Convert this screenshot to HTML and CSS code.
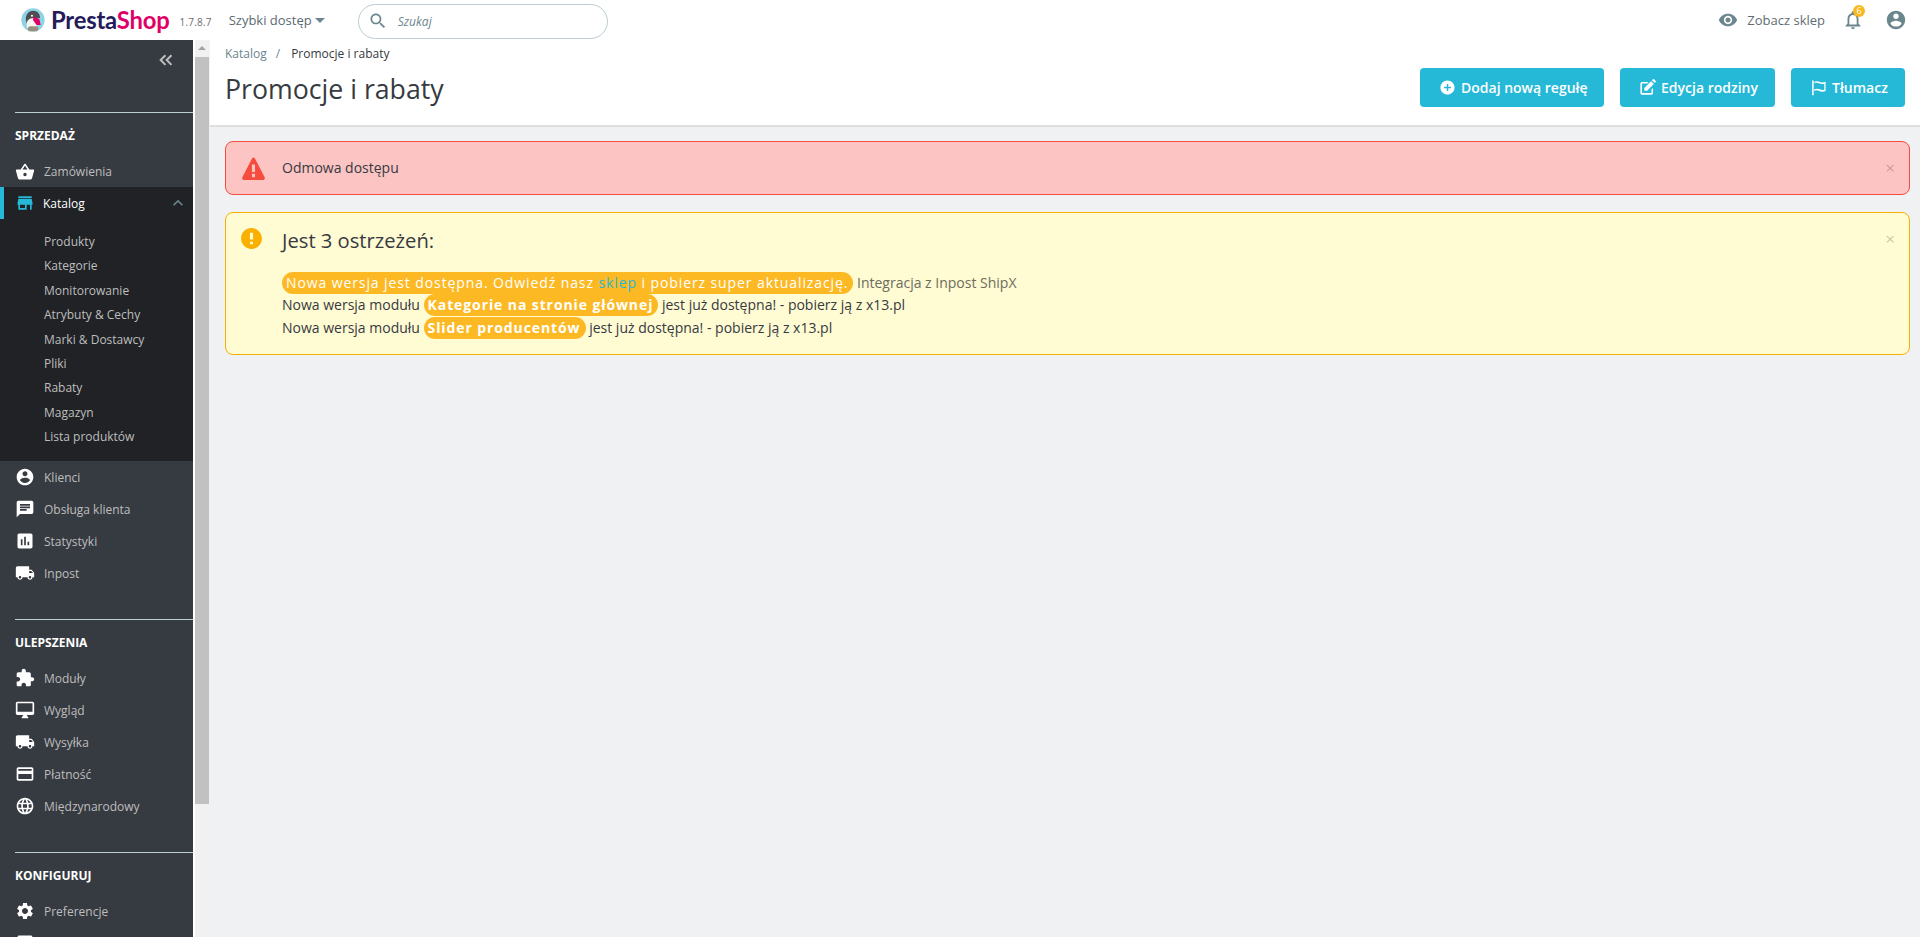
FILE: index.html
```html
<!DOCTYPE html>
<html lang="pl">
<head>
<meta charset="utf-8">
<title>Promocje i rabaty</title>
<link rel="stylesheet" href="styles.css">
</head>
<body>
<svg class="sprite" aria-hidden="true">
  <symbol id="i-basket" viewBox="0 0 24 24"><path d="M17.21 9l-4.38-6.56c-.19-.28-.51-.42-.83-.42-.32 0-.64.14-.83.43L6.79 9H2c-.55 0-1 .45-1 1 0 .09.01.18.04.27l2.54 9.27c.23.84 1 1.46 1.92 1.46h13c.92 0 1.69-.62 1.93-1.46l2.54-9.27L23 10c0-.55-.45-1-1-1h-4.79zM9 9l3-4.4L15 9H9zm3 8c-1.1 0-2-.9-2-2s.9-2 2-2 2 .9 2 2-.9 2-2 2z"/></symbol>
  <symbol id="i-store" viewBox="0 0 24 24"><path d="M20 4H4v2h16V4zm1 10v-2l-1-5H4l-1 5v2h1v6h10v-6h4v6h2v-6h1zm-9 4H6v-4h6v4z"/></symbol>
  <symbol id="i-account" viewBox="0 0 24 24"><path d="M12 2C6.48 2 2 6.48 2 12s4.48 10 10 10 10-4.48 10-10S17.52 2 12 2zm0 3c1.66 0 3 1.34 3 3s-1.34 3-3 3-3-1.34-3-3 1.34-3 3-3zm0 14.2c-2.5 0-4.71-1.28-6-3.22.03-1.99 4-3.08 6-3.08 1.99 0 5.97 1.09 6 3.08-1.29 1.94-3.5 3.22-6 3.22z"/></symbol>
  <symbol id="i-chat" viewBox="0 0 24 24"><path d="M20 2H4c-1.1 0-1.99.9-1.99 2L2 22l4-4h14c1.1 0 2-.9 2-2V4c0-1.1-.9-2-2-2zM6 9h12v2H6V9zm8 5H6v-2h8v2zm4-6H6V6h12v2z"/></symbol>
  <symbol id="i-stats" viewBox="0 0 24 24"><path d="M19 3H5c-1.1 0-2 .9-2 2v14c0 1.1.9 2 2 2h14c1.1 0 2-.9 2-2V5c0-1.1-.9-2-2-2zM9 17H7v-7h2v7zm4 0h-2V7h2v10zm4 0h-2v-4h2v4z"/></symbol>
  <symbol id="i-truck" viewBox="0 0 24 24"><path d="M20 8h-3V4H3c-1.1 0-2 .9-2 2v11h2c0 1.66 1.34 3 3 3s3-1.34 3-3h6c0 1.66 1.34 3 3 3s3-1.34 3-3h2v-5l-3-4zM6 18.5c-.83 0-1.5-.67-1.5-1.5s.67-1.5 1.5-1.5 1.5.67 1.5 1.5-.67 1.5-1.5 1.5zm13.5-9l1.96 2.5H17V9.5h2.5zm-1.5 9c-.83 0-1.5-.67-1.5-1.5s.67-1.5 1.5-1.5 1.5.67 1.5 1.5-.67 1.5-1.5 1.5z"/></symbol>
  <symbol id="i-puzzle" viewBox="0 0 24 24"><path d="M20.5 11H19V7c0-1.1-.9-2-2-2h-4V3.5C13 2.12 11.88 1 10.5 1S8 2.12 8 3.5V5H4c-1.1 0-1.99.9-1.99 2v3.8H3.5c1.49 0 2.7 1.21 2.7 2.7s-1.21 2.7-2.7 2.7H2V20c0 1.1.9 2 2 2h3.8v-1.5c0-1.49 1.21-2.7 2.7-2.7 1.49 0 2.7 1.21 2.7 2.7V22H17c1.1 0 2-.9 2-2v-4h1.5c1.38 0 2.5-1.12 2.5-2.5S21.88 11 20.5 11z"/></symbol>
  <symbol id="i-desktop" viewBox="0 0 24 24"><path d="M21 2H3c-1.1 0-2 .9-2 2v12c0 1.1.9 2 2 2h7l-2 3v1h8v-1l-2-3h7c1.1 0 2-.9 2-2V4c0-1.1-.9-2-2-2zm0 12H3V4h18v10z"/></symbol>
  <symbol id="i-card" viewBox="0 0 24 24"><path d="M20 4H4c-1.11 0-1.99.89-1.99 2L2 18c0 1.11.89 2 2 2h16c1.11 0 2-.89 2-2V6c0-1.11-.89-2-2-2zm0 14H4v-6h16v6zm0-10H4V6h16v2z"/></symbol>
  <symbol id="i-globe" viewBox="0 0 24 24"><path d="M11.99 2C6.47 2 2 6.48 2 12s4.47 10 9.99 10C17.52 22 22 17.52 22 12S17.52 2 11.99 2zm6.93 6h-2.95c-.32-1.25-.78-2.45-1.38-3.56 1.84.63 3.37 1.91 4.33 3.56zM12 4.04c.83 1.2 1.48 2.53 1.91 3.96h-3.82c.43-1.43 1.08-2.76 1.91-3.96zM4.26 14C4.1 13.36 4 12.69 4 12s.1-1.36.26-2h3.38c-.08.66-.14 1.32-.14 2 0 .68.06 1.34.14 2H4.26zm.82 2h2.95c.32 1.25.78 2.45 1.38 3.56-1.84-.63-3.37-1.9-4.33-3.56zm2.95-8H5.08c.96-1.66 2.49-2.93 4.33-3.56C8.81 5.55 8.35 6.75 8.03 8zM12 19.96c-.83-1.2-1.48-2.53-1.91-3.96h3.82c-.43 1.43-1.08 2.76-1.91 3.96zM14.34 14H9.66c-.09-.66-.16-1.32-.16-2 0-.68.07-1.35.16-2h4.68c.09.65.16 1.32.16 2 0 .68-.07 1.34-.16 2zm.25 5.56c.6-1.11 1.06-2.31 1.38-3.56h2.95c-.96 1.65-2.49 2.93-4.33 3.56zM16.36 14c.08-.66.14-1.32.14-2 0-.68-.06-1.34-.14-2h3.38c.16.64.26 1.31.26 2s-.1 1.36-.26 2h-3.38z"/></symbol>
  <symbol id="i-gear" viewBox="0 0 24 24"><path d="M19.14 12.94c.04-.3.06-.61.06-.94 0-.32-.02-.64-.07-.94l2.03-1.58c.18-.14.23-.41.12-.61l-1.92-3.32c-.12-.22-.37-.29-.59-.22l-2.39.96c-.5-.38-1.03-.7-1.62-.94l-.36-2.54c-.04-.24-.24-.41-.48-.41h-3.84c-.24 0-.43.17-.47.41l-.36 2.54c-.59.24-1.13.57-1.62.94l-2.39-.96c-.22-.08-.47 0-.59.22L2.74 8.87c-.12.21-.08.47.12.61l2.03 1.58c-.05.3-.09.63-.09.94s.02.64.07.94l-2.03 1.58c-.18.14-.23.41-.12.61l1.92 3.32c.12.22.37.29.59.22l2.39-.96c.5.38 1.03.7 1.62.94l.36 2.54c.05.24.24.41.48.41h3.84c.24 0 .44-.17.47-.41l.36-2.54c.59-.24 1.13-.56 1.62-.94l2.39.96c.22.08.47 0 .59-.22l1.92-3.32c.12-.22.07-.47-.12-.61l-2.01-1.58zM12 15.6c-1.98 0-3.6-1.62-3.6-3.6s1.62-3.6 3.6-3.6 3.6 1.62 3.6 3.6-1.62 3.6-3.6 3.6z"/></symbol>
  <symbol id="i-eye" viewBox="0 0 24 24"><path d="M12 4.5C7 4.5 2.73 7.61 1 12c1.73 4.39 6 7.5 11 7.5s9.27-3.11 11-7.5c-1.73-4.39-6-7.5-11-7.5zM12 17c-2.76 0-5-2.24-5-5s2.24-5 5-5 5 2.24 5 5-2.24 5-5 5zm0-8c-1.66 0-3 1.34-3 3s1.34 3 3 3 3-1.34 3-3-1.34-3-3-3z"/></symbol>
  <symbol id="i-bell" viewBox="0 0 24 24"><path d="M12 22c1.1 0 2-.9 2-2h-4c0 1.1.9 2 2 2zm6-6v-5c0-3.07-1.63-5.64-4.5-6.32V4c0-.83-.67-1.5-1.5-1.5s-1.5.67-1.5 1.5v.68C7.64 5.36 6 7.92 6 11v5l-2 2v1h16v-1l-2-2zm-2 1H8v-6c0-2.48 1.51-4.5 4-4.5s4 2.02 4 4.5v6z"/></symbol>
  <symbol id="i-search" viewBox="0 0 24 24"><path d="M15.5 14h-.79l-.28-.27C15.41 12.59 16 11.11 16 9.5 16 5.91 13.09 3 9.5 3S3 5.91 3 9.5 5.91 16 9.5 16c1.61 0 3.09-.59 4.23-1.57l.27.28v.79l5 4.99L20.49 19l-4.99-5zm-6 0C7.01 14 5 11.99 5 9.5S7.01 5 9.5 5 14 7.01 14 9.5 11.99 14 9.5 14z"/></symbol>
  <symbol id="i-warning" viewBox="0 2 24 20" preserveAspectRatio="none"><path d="M10.6 3.200c.6-1.100 2.200-1.100 2.800 0l9.300 16.300c.6 1.100-.2 2.500-1.400 2.500H2.700c-1.200 0-2-1.400-1.400-2.500zM10.500 8.500v6.500h3V8.500zM10.500 16.500v3h3v-3z" fill-rule="evenodd"/></symbol>
  <symbol id="i-error" viewBox="0 0 24 24"><path d="M12 2C6.48 2 2 6.48 2 12s4.48 10 10 10 10-4.48 10-10S17.52 2 12 2zm1.500 15.500h-3v-2.500h3zm0-4.500h-3V6.500h3z"/></symbol>
  <symbol id="i-add" viewBox="0 0 24 24"><path d="M12 2C6.48 2 2 6.48 2 12s4.48 10 10 10 10-4.48 10-10S17.52 2 12 2zm5 11h-4v4h-2v-4H7v-2h4V7h2v4h4v2z"/></symbol>
  <symbol id="i-less" viewBox="0 0 24 24"><path d="M12 8l-6 6 1.41 1.41L12 10.83l4.59 4.58L18 14z"/></symbol>
  <symbol id="i-edit" viewBox="0 0 24 24"><path d="M19 12.5V19a2 2 0 0 1-2 2H5a2 2 0 0 1-2-2V7a2 2 0 0 1 2-2h8.500l-2 2H5v12h12v-4.500zM20.300 1.600l2.100 2.100c.4.4.4 1 0 1.400l-1.300 1.300-3.500-3.500 1.300-1.300c.4-.4 1-.4 1.400 0zM16.500 4l3.500 3.500-8.500 8.500H8v-3.500z"/></symbol>
  <symbol id="i-flag" viewBox="0 0 24 24"><path d="M3 2h2.200v21H3zM6 4c2.700-1.300 5-1 7.300 0 2.600 1.100 5.200 1.200 8.700 0v12.800c-3.500 1.500-6.300 1.300-9 .1-2.300-1-4.500-1.200-7-.1v-2.400c2.900-1.100 5.500-.9 7.900.2 2.200 1 4.300 1.100 6.300.4V6.900c-2.800.6-5.100.3-7.600-.8-2-.9-3.700-1-6.100-.1z"/></symbol>
  <symbol id="i-collapse" viewBox="0 0 24 24"><path d="M11.700 4.600l1.900 1.900L8.100 12l5.500 5.500-1.900 1.900L4.300 12zM19.700 4.600l1.900 1.900-5.500 5.500 5.500 5.500-1.900 1.900L12.300 12z"/></symbol>
</svg>

<div class="app">
  <header class="topbar">
    <svg class="logo-mark" viewBox="0 0 34 34" aria-hidden="true">
      <circle cx="17" cy="17" r="16.500" fill="#8ed3e3"/>
      <path d="M7 17c-1-7 4-13 10-13s10 4 10 10l-7 1-5 9-7-2z" fill="#4d4d52"/>
      <path d="M10 31c-3-6-3-13 3-16l7-1 2 6 1 8-1 3c-3 2-9 2-12 0z" fill="#f7f7f2"/>
      <path d="M18 12l8 4 2 8-6 0-5-7z" fill="#df0067"/>
      <path d="M9 29l3-3h11l2 3-2 4H11z" fill="#9a8f7d"/>
      <circle cx="15.500" cy="11" r="1.500" fill="#fff"/>
    </svg>
    <span class="logo-text">Presta<span class="logo-shop">Shop</span></span>
    <span class="version">1.7.8.7</span>
    <span class="quick">Szybki dostęp<span class="caret"></span></span>
    <div class="search">
      <svg class="search-icon"><use href="#i-search"/></svg>
      <span class="search-text">Szukaj</span>
    </div>
    <div class="top-right">
      <svg class="eye"><use href="#i-eye"/></svg>
      <span class="see-shop">Zobacz sklep</span>
      <span class="bell-wrap">
        <svg class="bell"><use href="#i-bell"/></svg>
        <span class="badge">6</span>
      </span>
      <svg class="user"><use href="#i-account"/></svg>
    </div>
  </header>

  <aside class="side">
    <nav class="nav">
      <div class="collapse-row"><svg class="collapse"><use href="#i-collapse"/></svg></div>
      <section class="group">
        <h2 class="group-title">SPRZEDAŻ</h2>
        <a class="item"><svg class="ic"><use href="#i-basket"/></svg>Zamówienia</a>
        <a class="item active"><svg class="ic"><use href="#i-store"/></svg>Katalog<svg class="chev"><use href="#i-less"/></svg></a>
        <div class="sub">
          <a class="sub-item">Produkty</a>
          <a class="sub-item">Kategorie</a>
          <a class="sub-item">Monitorowanie</a>
          <a class="sub-item">Atrybuty &amp; Cechy</a>
          <a class="sub-item">Marki &amp; Dostawcy</a>
          <a class="sub-item">Pliki</a>
          <a class="sub-item">Rabaty</a>
          <a class="sub-item">Magazyn</a>
          <a class="sub-item">Lista produktów</a>
        </div>
        <a class="item"><svg class="ic"><use href="#i-account"/></svg>Klienci</a>
        <a class="item"><svg class="ic"><use href="#i-chat"/></svg>Obsługa klienta</a>
        <a class="item"><svg class="ic"><use href="#i-stats"/></svg>Statystyki</a>
        <a class="item"><svg class="ic"><use href="#i-truck"/></svg>Inpost</a>
      </section>
      <section class="group">
        <h2 class="group-title">ULEPSZENIA</h2>
        <a class="item"><svg class="ic"><use href="#i-puzzle"/></svg>Moduły</a>
        <a class="item"><svg class="ic"><use href="#i-desktop"/></svg>Wygląd</a>
        <a class="item"><svg class="ic"><use href="#i-truck"/></svg>Wysyłka</a>
        <a class="item"><svg class="ic"><use href="#i-card"/></svg>Płatność</a>
        <a class="item"><svg class="ic"><use href="#i-globe"/></svg>Międzynarodowy</a>
      </section>
      <section class="group">
        <h2 class="group-title">KONFIGURUJ</h2>
        <a class="item"><svg class="ic"><use href="#i-gear"/></svg>Preferencje</a>
        <a class="item"><svg class="ic"><use href="#i-stats"/></svg></a>
      </section>
    </nav>
    <div class="scroll">
      <span class="scroll-up"></span>
      <span class="scroll-thumb"></span>
    </div>
  </aside>

  <main class="main">
    <div class="head">
      <div class="head-left">
        <div class="crumbs"><span class="crumb">Katalog</span><span class="sep">/</span><span class="crumb-now">Promocje i rabaty</span></div>
        <h1 class="title">Promocje i rabaty</h1>
      </div>
      <div class="actions">
        <a class="btn btn-add"><svg class="btn-ic"><use href="#i-add"/></svg>Dodaj nową regułę</a>
        <a class="btn btn-edit"><svg class="btn-ic btn-ic-edit"><use href="#i-edit"/></svg>Edycja rodziny</a>
        <a class="btn btn-flag"><svg class="btn-ic"><use href="#i-flag"/></svg>Tłumacz</a>
      </div>
    </div>
    <div class="content">
      <div class="alert alert-danger">
        <svg class="alert-ic danger-ic"><use href="#i-warning"/></svg>
        <p class="alert-text">Odmowa dostępu</p>
        <span class="close">×</span>
      </div>
      <div class="alert alert-warn">
        <svg class="alert-ic warn-ic"><use href="#i-error"/></svg>
        <div class="warn-body">
          <h4 class="warn-title">Jest 3 ostrzeżeń:</h4>
          <div class="warn-line"><span class="pill">Nowa wersja jest dostępna. Odwiedź nasz <a class="link">sklep</a> i pobierz super aktualizację.</span> <span class="muted">Integracja z Inpost ShipX</span></div>
          <div class="warn-line">Nowa wersja modułu <span class="pill pill-bold">Kategorie na stronie głównej</span> jest już dostępna! - pobierz ją z x13.pl</div>
          <div class="warn-line">Nowa wersja modułu <span class="pill pill-bold">Slider producentów</span> jest już dostępna! - pobierz ją z x13.pl</div>
        </div>
        <span class="close">×</span>
      </div>
    </div>
  </main>
</div>
</body>
</html>
```
FILE: styles.css
```css
* { box-sizing: border-box; }
html, body { margin: 0; height: 100%; overflow: hidden; }
body {
  font-family: "Open Sans", "Liberation Sans", sans-serif;
  font-size: 13px;
  color: #363a41;
  background: #eff1f2;
}
.sprite { display: none; }
svg { fill: currentColor; flex: none; }
h1, h2, h4, p { margin: 0; font-weight: 400; }

.app {
  display: grid;
  grid-template-columns: 210px 1fr;
  grid-template-rows: 40px 1fr;
  height: 937px;
}

/* top bar */
.topbar {
  grid-column: 1 / 3;
  display: flex;
  align-items: center;
  background: #fff;
  padding-left: 21px;
  padding-right: 13px;
  color: #6c868e;
}
.logo-mark { width: 24px; height: 24px; }
.logo-text {
  font-family: Lato, "Open Sans", sans-serif;
  font-size: 23.800px;
  font-weight: 700;
  color: #251b5b;
  margin-left: 6px;
  line-height: 40px;
  letter-spacing: -.2px;
}
.logo-shop { color: #df0067; }
.version { font-size: 10px; color: #6c6c6c; margin-left: 10px; padding-top: 4px; letter-spacing: .2px; }
.quick { margin-left: 17px; font-size: 13px; color: #5a6a72; display: flex; align-items: center; }
.caret {
  width: 0; height: 0; margin-left: 3px;
  border-left: 5px solid transparent;
  border-right: 5px solid transparent;
  border-top: 5px solid #6c868e;
}
.search {
  margin-left: 33px;
  margin-top: 2px;
  width: 250px;
  height: 35px;
  border: 1px solid #bbcdd2;
  border-radius: 18px;
  display: flex;
  align-items: center;
  padding-left: 9px;
}
.search-icon { width: 20px; height: 20px; color: #6c868e; }
.search-text { margin-left: 10px; font-style: italic; font-size: 12px; color: #6c868e; }
.top-right { margin-left: auto; display: flex; align-items: center; }
.eye { width: 20px; height: 20px; margin-right: 9px; }
.see-shop { font-size: 13px; color: #5f6c72; }
.bell-wrap { position: relative; margin-left: 17px; width: 22px; height: 22px; display: block; }
.bell { width: 22px; height: 22px; }
.badge {
  position: absolute; top: -4px; left: 11px;
  width: 12px; height: 12px; border-radius: 50%;
  background: #fbb81f; color: #fff;
  font-size: 9px; line-height: 12px; text-align: center;
}
.user { width: 22px; height: 22px; margin-left: 21px; }

/* sidebar */
.side { display: flex; min-height: 0; overflow: hidden; }
.nav { width: 193px; background: #363a41; height: 897px; overflow: hidden; flex: none; }
.collapse-row { height: 72px; display: flex; justify-content: flex-end; padding: 11px 19px 0 0; }
.collapse { width: 18px; height: 18px; color: #bebebe; }
.group { padding-bottom: 30px; }
.group-title {
  margin-left: 15px;
  border-top: 1px solid #bbcdd2;
  height: 43px;
  padding-top: 3px;
  display: flex;
  align-items: center;
  font-size: 12px;
  font-weight: 700;
  color: #fff;
}
.item {
  height: 32px;
  display: flex;
  align-items: center;
  padding-left: 15px;
  padding-top: 1px;
  font-size: 12px;
  color: #bebebe;
}
.ic { width: 20px; height: 20px; color: #fff; margin-right: 9px; }
.item.active {
  background: #202226;
  color: #fff;
  box-shadow: inset 4px 0 0 #25b9d7;
  padding-top: 0;
}
.item.active .ic { color: #25b9d7; margin-right: 8px; }
.chev { width: 20px; height: 20px; color: #6c868e; margin-left: auto; margin-right: 5px; }
.sub { background: #202226; padding: 11px 0 11.400px 44px; }
.sub-item { display: block; height: 24.400px; line-height: 24.400px; font-size: 12px; color: #bebebe; }

.scroll { flex: 1; background: #f1f1f1; border-left: 2px solid #fff; padding: 0 1px 0 0; display: flex; flex-direction: column; align-items: stretch; }
.scroll-up { height: 17px; position: relative; }
.scroll-up::before {
  content: ""; position: absolute; left: 3px; top: 6px;
  border-left: 4px solid transparent;
  border-right: 4px solid transparent;
  border-bottom: 4px solid #a3a3a3;
}
.scroll-thumb { height: 747px; background: #c1c1c1; }

/* main */
.main { min-width: 0; display: flex; flex-direction: column; }
.head {
  height: 87px;
  background: #fff;
  border-bottom: 2px solid #dfdfdf;
  display: flex;
  justify-content: space-between;
  padding: 0 15px;
}
.crumbs { height: 29px; padding-top: 5px; font-size: 12px; line-height: 18px; }
.crumb { color: #6c868e; }
.sep { color: #6c868e; margin: 0 11px 0 9px; }
.title { font-size: 26.700px; line-height: 40px; color: #363a41; }
.actions { display: flex; gap: 16px; padding-top: 28px; }
.btn {
  height: 39px;
  border-radius: 4px;
  background: #25b9d7;
  color: #fff;
  font-size: 14px;
  font-weight: 600;
  display: flex;
  align-items: center;
}
.btn-add { width: 184px; padding-left: 19px; }
.btn-edit { width: 155px; padding-left: 18px; }
.btn-flag { width: 114px; padding-left: 19px; }
.btn-ic { width: 17px; height: 17px; margin-right: 5px; }
.btn-ic-edit { width: 19px; height: 19px; margin-right: 4px; }

.content { padding: 14px 10px 0 15px; display: flex; flex-direction: column; gap: 17px; }
.alert {
  position: relative;
  border: 1px solid;
  border-radius: 8px;
  display: flex;
  padding-left: 15px;
}
.alert-danger { height: 54px; background: #fdc4c4; border-color: #f54c3e; align-items: center; }
.alert-warn { height: 143px; background: #fffbd3; border-color: #fab000; padding-top: 13px; }
.alert-ic { width: 25px; height: 23px; }
.danger-ic { color: #f54c3e; }
.warn-ic { color: #fab000; width: 25px; height: 25px; margin-left: -2px; margin-right: 2px; }
.alert-text { margin: 0 0 2px 16px; font-size: 14px; }
.warn-body { margin-left: 16px; padding-top: 1px; }
.warn-title { font-size: 20.200px; line-height: 26px; margin-bottom: 19px; }
.warn-line { height: 22.400px; line-height: 22.400px; font-size: 14px; white-space: nowrap; }
.pill {
  display: inline-block;
  background: #fdb924;
  color: #fff;
  border-radius: 11px;
  padding: 0 5px 0 4px;
  letter-spacing: .9px;
  font-weight: 500;
  line-height: 22px;
}
.pill-bold { font-weight: 700; letter-spacing: .9px; }
.link { color: #25b9d7; }
.muted { color: #6d6d5e; }
.close {
  position: absolute;
  right: 14px;
  top: 14px;
  font-size: 17px;
  line-height: 24px;
  color: rgba(0,0,0,.22);
}
```
